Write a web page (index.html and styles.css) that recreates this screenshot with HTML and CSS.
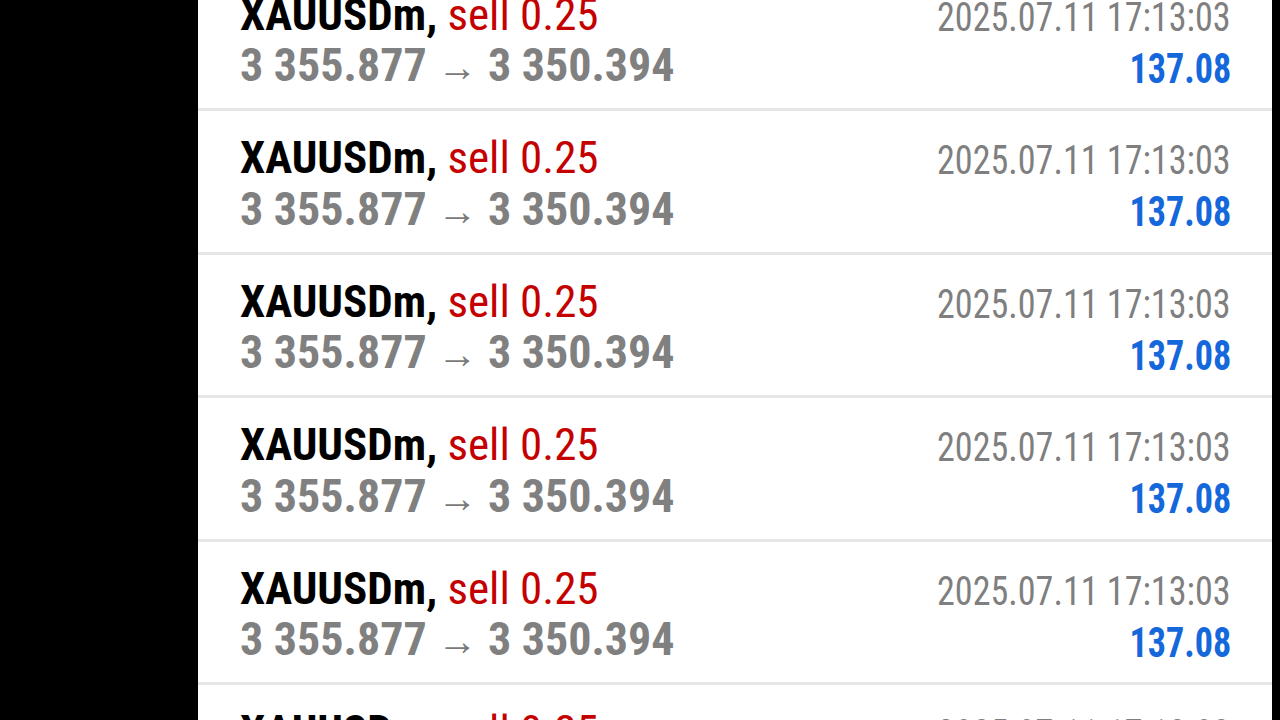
FILE: index.html
```html
<!DOCTYPE html>
<html lang="en">
<head>
  <meta charset="UTF-8" />
  <meta name="viewport" content="width=device-width, initial-scale=1.0" />
  <title>History</title>
  <link rel="stylesheet" href="styles.css">
</head>
<body>
  <div class="screen">
    <ul class="deals">
      <li class="deal">
        <div class="deal-top">
          <span class="symbol">XAUUSDm,</span> <span class="side">sell 0.25</span>
        </div>
        <div class="time"><span>2025.07.11 17:13:03</span></div>
        <div class="prices">3 355.877 <span class="arrow">→</span> 3 350.394</div>
        <div class="profit"><span>137.08</span></div>
      </li>
      <li class="deal">
        <div class="deal-top">
          <span class="symbol">XAUUSDm,</span> <span class="side">sell 0.25</span>
        </div>
        <div class="time"><span>2025.07.11 17:13:03</span></div>
        <div class="prices">3 355.877 <span class="arrow">→</span> 3 350.394</div>
        <div class="profit"><span>137.08</span></div>
      </li>
      <li class="deal">
        <div class="deal-top">
          <span class="symbol">XAUUSDm,</span> <span class="side">sell 0.25</span>
        </div>
        <div class="time"><span>2025.07.11 17:13:03</span></div>
        <div class="prices">3 355.877 <span class="arrow">→</span> 3 350.394</div>
        <div class="profit"><span>137.08</span></div>
      </li>
      <li class="deal">
        <div class="deal-top">
          <span class="symbol">XAUUSDm,</span> <span class="side">sell 0.25</span>
        </div>
        <div class="time"><span>2025.07.11 17:13:03</span></div>
        <div class="prices">3 355.877 <span class="arrow">→</span> 3 350.394</div>
        <div class="profit"><span>137.08</span></div>
      </li>
      <li class="deal">
        <div class="deal-top">
          <span class="symbol">XAUUSDm,</span> <span class="side">sell 0.25</span>
        </div>
        <div class="time"><span>2025.07.11 17:13:03</span></div>
        <div class="prices">3 355.877 <span class="arrow">→</span> 3 350.394</div>
        <div class="profit"><span>137.08</span></div>
      </li>
      <li class="deal">
        <div class="deal-top">
          <span class="symbol">XAUUSDm,</span> <span class="side">sell 0.25</span>
        </div>
        <div class="time"><span>2025.07.11 17:13:03</span></div>
        <div class="prices">3 355.877 <span class="arrow">→</span> 3 350.394</div>
        <div class="profit"><span>137.08</span></div>
      </li>
    </ul>
  </div>
</body>
</html>
```

FILE: styles.css
```css
html, body {
  margin: 0;
  height: 100%;
  background: #000;
  overflow: hidden;
}
body {
  font-family: 'Roboto Condensed', 'Roboto', 'Liberation Sans', sans-serif;
}
.screen {
  margin-left: 198px;
  width: 1074px;
  height: 720px;
  background: #fff;
  overflow: hidden;
}
.deals {
  list-style: none;
  margin: -32.5px 0 0;
  padding: 0;
}
.deal {
  display: grid;
  grid-template-columns: 1fr auto;
  grid-template-rows: 50px 50px;
  align-content: start;
  align-items: center;
  height: 118.5px;
  box-sizing: content-box;
  padding: 22px 41px 0 42px;
  border-bottom: 3px solid #e6e6e6;
}
.deal > div {
  line-height: 50px;
  white-space: nowrap;
}
.deal-top {
  font-size: 45px;
}
.symbol {
  font-weight: 700;
  color: #000;
}
.side {
  color: #c40000;
}
.time {
  font-size: 41px;
  color: #7f7f7f;
  text-align: right;
  padding-top: 4px;
}
.time span,
.profit span {
  display: inline-block;
  transform-origin: right center;
}
.time span {
  transform: scaleX(0.88);
}
.prices {
  font-size: 46px;
  font-weight: 700;
  color: #808080;
  padding-top: 4px;
}
.arrow {
  font-weight: 400;
  font-size: 40px;
  color: #7a7a7a;
}
.profit {
  font-size: 42px;
  font-weight: 700;
  color: #1468dc;
  text-align: right;
  padding-top: 8px;
}
.profit span {
  transform: scaleX(0.86);
}
```
